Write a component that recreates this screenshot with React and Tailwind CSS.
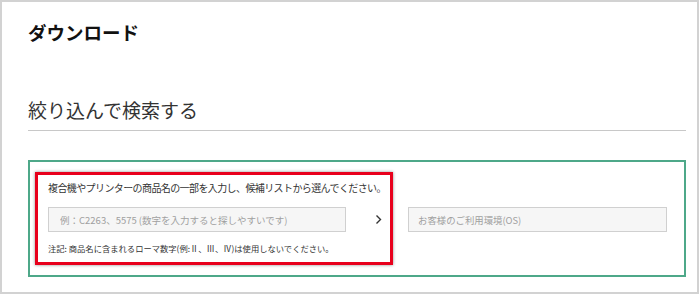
export default function App() {
  return (
    <div className="h-[294px] w-[700px] bg-white font-['Noto_Sans_CJK_JP',sans-serif]">
      <div className="h-[294px] w-[699px] border-2 border-[#d2d2d2] pl-[26px] pr-[11px]">
        <h1 className="mt-[18px] h-[24px] text-[18.5px] font-bold leading-[24px] text-[#111]">
          ダウンロード
        </h1>

        <h2 className="mt-[52px] h-[28px] text-[19px] font-normal leading-[28px] text-[#333]">
          絞り込んで検索する
        </h2>

        <div className="mt-[6px] h-px w-[658px] bg-[#c8c8c8]" />

        <section className="mt-[29px] flex h-[117px] w-[658px] items-start border-2 border-[#4ea889]">
          <div className="ml-[5px] mt-[10px] h-[93px] w-[358px] border-[3px] border-[#e8001c] pl-[10px] pt-[6px] shadow-[0_0_3px_rgba(0,0,0,0.45)]">
            <p className="h-[14px] text-[10px] leading-[14px] tracking-[-0.6px] text-[#333]">
              複合機やプリンターの商品名の一部を入力し、候補リストから選んでください。
            </p>

            <div className="mt-[12px] flex items-center">
              <input
                type="text"
                placeholder="例：C2263、5575 (数字を入力すると探しやすいです)"
                className="h-[25px] w-[298px] border border-[#d0d0d0] bg-[#f6f6f6] pl-[11px] text-[9.5px] outline-none placeholder:text-[#a0a0a0]"
              />
              <svg
                width="7"
                height="11"
                viewBox="0 0 7 11"
                className="ml-[29px]"
              >
                <path
                  d="M1.5 1.5 L5.5 5.5 L1.5 9.5"
                  fill="none"
                  stroke="#333"
                  strokeWidth="1.4"
                />
              </svg>
            </div>

            <p className="mt-[9px] h-[14px] text-[8.3px] leading-[14px] text-[#333]">
              注記: 商品名に含まれるローマ数字(例:Ⅱ、Ⅲ、Ⅳ)は使用しないでください。
            </p>
          </div>

          <input
            type="text"
            placeholder="お客様のご利用環境(OS)"
            className="ml-[15px] mt-[45px] h-[25px] w-[259px] border border-[#d0d0d0] bg-[#f6f6f6] pl-[9px] text-[9.4px] outline-none placeholder:text-[#a0a0a0]"
          />
        </section>
      </div>
    </div>
  );
}
